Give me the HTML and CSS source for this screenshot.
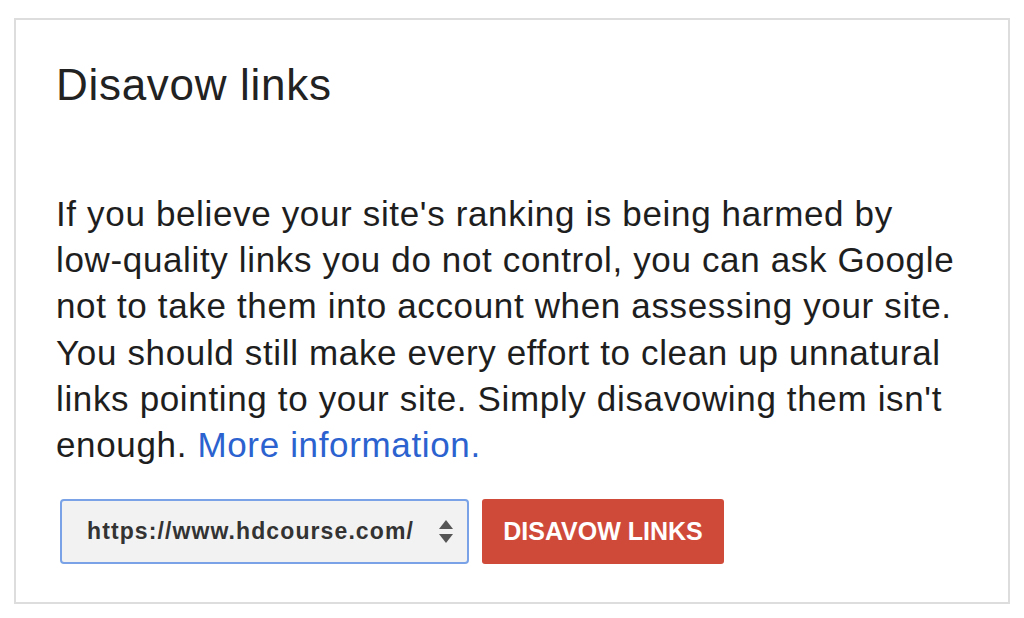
FILE: index.html
```html
<!DOCTYPE html>
<html lang="en">
<head>
<meta charset="utf-8">
<title>Disavow links</title>
<link rel="stylesheet" href="styles.css">
</head>
<body>
<div class="card">
  <h1 class="title">Disavow links</h1>
  <p class="desc">If you believe your site's ranking is being harmed by<br>low-quality links you do not control, you can ask Google<br>not to take them into account when assessing your site.<br>You should still make every effort to clean up unnatural<br>links pointing to your site. Simply disavowing them isn't<br>enough. <a class="more" href="#">More information.</a></p>
  <div class="actions">
    <div class="select">
      <span class="select-text">https://www.hdcourse.com/</span>
      <svg class="arrows" width="16" height="26" viewBox="0 0 16 26" aria-hidden="true">
        <path d="M8 1 L15 10 L1 10 Z" fill="#555"/>
        <path d="M1 15 L15 15 L8 24 Z" fill="#555"/>
      </svg>
    </div>
    <button class="btn" type="button">DISAVOW LINKS</button>
  </div>
</div>
</body>
</html>
```
FILE: styles.css
```css
html, body {
  margin: 0;
  padding: 0;
  background: #ffffff;
}
body {
  font-family: "Liberation Sans", Arial, sans-serif;
  color: #222222;
  padding: 18px 14px 14px 14px;
}
.card {
  box-sizing: border-box;
  width: 996px;
  height: 586px;
  border: 2px solid #dddddd;
  padding: 39px 30px 0 40px;
}
.title {
  margin: 0;
  font-size: 44px;
  line-height: 52px;
  font-weight: normal;
  letter-spacing: 0.7px;
  color: #222222;
}
.desc {
  margin: 80px 0 0 0;
  font-size: 35px;
  line-height: 46.2px;
  letter-spacing: 0.65px;
  color: #1e1e1e;
  white-space: nowrap;
}
.more {
  color: #2b62cf;
  text-decoration: none;
}
.actions {
  display: flex;
  align-items: center;
  gap: 13px;
  margin: 31px 0 0 4px;
}
.select {
  box-sizing: border-box;
  width: 409px;
  height: 65px;
  border: 2px solid #79a3e6;
  border-radius: 4px;
  background: #f2f2f2;
  display: flex;
  align-items: center;
  justify-content: space-between;
  padding: 0 13px 0 25px;
}
.select-text {
  font-size: 23px;
  font-weight: bold;
  letter-spacing: 1.1px;
  color: #333333;
}
.arrows {
  display: block;
}
.btn {
  box-sizing: border-box;
  width: 242px;
  height: 65px;
  border: none;
  border-radius: 3px;
  background: #d04a3a;
  color: #ffffff;
  font-family: "Liberation Sans", Arial, sans-serif;
  font-size: 25px;
  font-weight: bold;
  padding: 0;
  cursor: pointer;
}
```
